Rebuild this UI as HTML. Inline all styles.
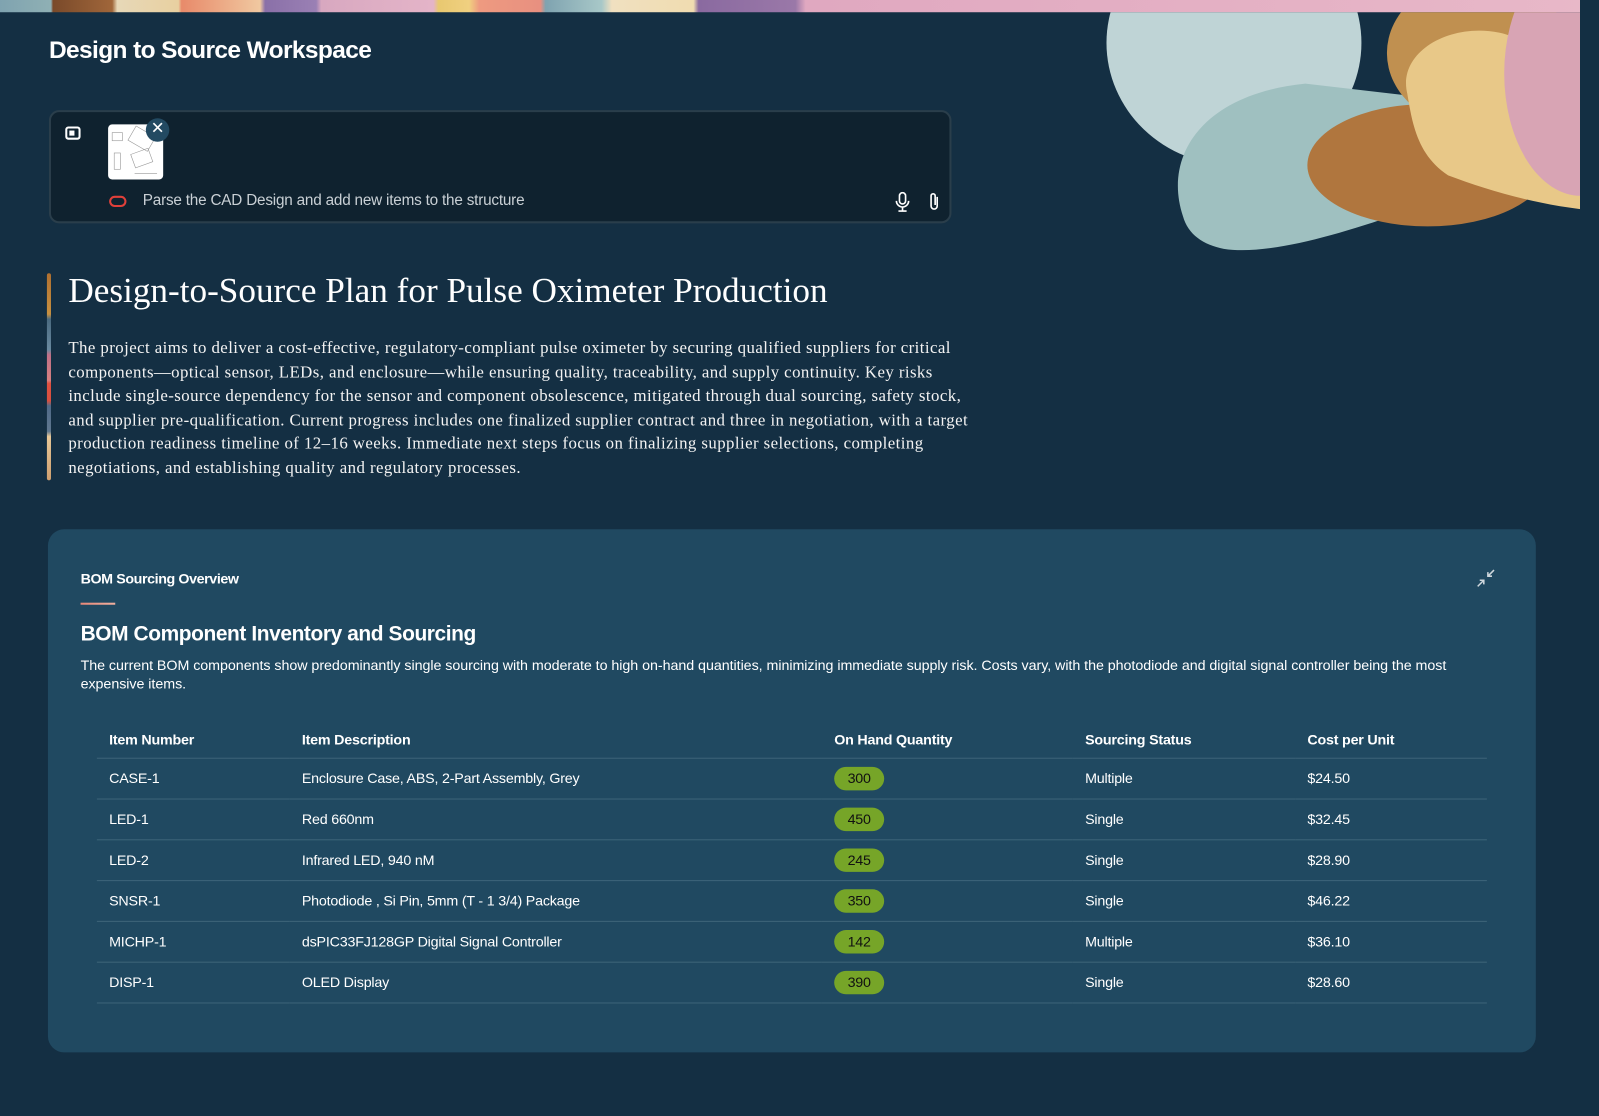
<!DOCTYPE html>
<html><head><meta charset="utf-8"><style>
*{margin:0;padding:0;box-sizing:border-box}
body{width:1599px;height:1115px;background:#142f43;font-family:"Liberation Sans",sans-serif;color:#fff;position:relative;overflow:hidden}
#w{position:absolute;left:0;top:0;width:1568px;height:1094px;transform:scale(1.0198);transform-origin:0 0}
.strip{position:absolute;left:0;top:0;width:1568px;height:12px;background:linear-gradient(90deg,#7fa3b0 0,#8fb0b4 50px,#7a4a2a 52px,#a0663a 110px,#e7d8b8 115px,#e8d0a0 175px,#e88a6a 178px,#f0c8a0 255px,#8a70a8 260px,#9a80b4 310px,#d8a8c0 315px,#e4b4c8 425px,#e8c870 430px,#f0d080 460px,#ee9a80 470px,#e89080 530px,#7fa3b0 535px,#a8c8c8 590px,#f0e0c0 600px,#f0dcb0 680px,#8a6aa0 685px,#9a78a8 780px,#e0a8c0 790px,#e8b8c8 100%)}
.rb{position:absolute;left:1549px;top:0;width:40px;height:1115px;background:#132f43}
h1{position:absolute;left:48px;top:36px;font-size:24px;font-weight:bold;letter-spacing:-0.6px}
.inp{position:absolute;left:48px;top:108px;width:885px;height:111px;background:#0f222f;border:2px solid #2a3e4b;border-radius:10px}
.thumb{position:absolute;left:56px;top:12px;width:54px;height:54px;background:#fff;border-radius:4px}
.x{position:absolute;left:93px;top:6px;width:23px;height:23px;border-radius:50%;background:#234a62;color:#fff;font-size:16px;text-align:center;line-height:22px}
.ph{position:absolute;left:90px;top:78px;font-size:15px;color:#c9d0d5;letter-spacing:-0.2px}
h2{position:absolute;left:67px;top:266px;font-family:"Liberation Serif",serif;font-weight:normal;font-size:34.5px;white-space:nowrap}
.bar{position:absolute;left:46px;top:268px;width:4px;height:203px;background:linear-gradient(#b07030 0,#c89040 40px,#4a6a80 45px,#6a8aa0 75px,#c07088 80px,#d88080 105px,#e05040 108px,#d85040 125px,#506a88 130px,#607890 155px,#e8c898 160px,#d0a070 203px);border-radius:2px}
.p{position:absolute;left:67px;top:329px;font-family:"Liberation Serif",serif;font-size:16.5px;letter-spacing:0.42px;line-height:23.6px;white-space:nowrap;color:#f3f3f3}
.card{position:absolute;left:47px;top:519px;width:1459px;height:513px;background:#204961;border-radius:16px}
.ov{position:absolute;left:32px;top:40px;font-size:14px;font-weight:bold;letter-spacing:-0.4px}
.ul{position:absolute;left:32px;top:72px;width:34px;height:2px;background:linear-gradient(90deg,#e88878,#f0b0a0)}
.h3{position:absolute;left:32px;top:91px;font-size:20.5px;font-weight:bold;letter-spacing:-0.4px}
.desc{position:absolute;left:32px;top:124px;width:1370px;font-size:14px;line-height:18px;letter-spacing:-0.05px}
table{position:absolute;left:48px;top:188px;width:1363px;border-collapse:collapse;font-size:14px;letter-spacing:-0.2px}
th{text-align:left;font-weight:bold;height:36px;border-bottom:1px solid #3d6479;padding-left:12px}
td{height:40px;border-bottom:1px solid #3d6479;padding-left:12px}
.pill{display:inline-block;background:#76a528;color:#111;border-radius:12px;width:49px;height:23px;line-height:23px;text-align:center}
</style></head><body>
<div id="w">
<div class="strip"></div>
<svg style="position:absolute;left:1080px;top:12px" width="488" height="235" viewBox="0 0 488 235">
<ellipse cx="130" cy="30" rx="125" ry="120" fill="#bfd4d6"/>
<path d="M80 200 C60 140 100 80 200 70 L330 85 L340 180 C260 210 170 240 120 232 C100 228 85 218 80 200Z" fill="#9fc0c0"/>
<ellipse cx="370" cy="40" rx="90" ry="75" fill="#c09050"/>
<ellipse cx="320" cy="150" rx="118" ry="60" fill="#b0763e"/>
<path d="M300 80 C290 40 340 10 390 20 C440 30 470 100 488 140 L488 195 C430 190 380 175 340 160 C310 140 305 110 300 80Z" fill="#e8c888"/>
<ellipse cx="470" cy="60" rx="75" ry="120" fill="#d8a4b4"/>
</svg>
<h1>Design to Source Workspace</h1>
<div class="inp">
<div style="position:absolute;left:14px;top:14px;width:15px;height:13px;border:2px solid #fff;border-radius:3px"><div style="position:absolute;left:2px;top:2px;width:5px;height:5px;background:#fff"></div></div>
<div class="thumb"><svg width="54" height="54"><g stroke="#999" fill="none" stroke-width="0.6"><rect x="4" y="8" width="10" height="8"/><rect x="22" y="6" width="22" height="16" transform="rotate(30 33 14)"/><rect x="6" y="28" width="6" height="16"/><rect x="24" y="26" width="18" height="14" transform="rotate(-20 33 33)"/><line x1="26" y1="48" x2="48" y2="48"/></g></svg></div>
<div class="x">✕</div>
<div style="position:absolute;left:57px;top:82px;width:17px;height:11px;border:2px solid #e0403a;border-radius:6px"></div>
<div class="ph">Parse the CAD Design and add new items to the structure</div>
<svg style="position:absolute;left:828px;top:78px" width="14" height="20" viewBox="0 0 14 20" fill="none" stroke="#fff" stroke-width="1.6"><rect x="4" y="1" width="6" height="11" rx="3"/><path d="M1 9a6 6 0 0 0 12 0M7 15v4M3 19h8"/></svg>
<svg style="position:absolute;left:860px;top:78px" width="12" height="20" viewBox="0 0 12 20" fill="none" stroke="#fff" stroke-width="1.6"><path d="M9 5v9a3 3 0 0 1-6 0V4a2 2 0 0 1 4 0v9"/></svg>
</div>
<div class="bar"></div>
<h2>Design-to-Source Plan for Pulse Oximeter Production</h2>
<div class="p">The project aims to deliver a cost-effective, regulatory-compliant pulse oximeter by securing qualified suppliers for critical<br>components—optical sensor, LEDs, and enclosure—while ensuring quality, traceability, and supply continuity. Key risks<br>include single-source dependency for the sensor and component obsolescence, mitigated through dual sourcing, safety stock,<br>and supplier pre-qualification. Current progress includes one finalized supplier contract and three in negotiation, with a target<br>production readiness timeline of 12–16 weeks. Immediate next steps focus on finalizing supplier selections, completing<br>negotiations, and establishing quality and regulatory processes.</div>
<div class="card">
<div class="ov">BOM Sourcing Overview</div>
<svg style="position:absolute;left:1401px;top:39px" width="18" height="18" viewBox="0 0 18 18" fill="none" stroke="#cfd8dd" stroke-width="1.5"><path d="M17 1l-6 6M11 3v4h4M1 17l6-6M3 11h4v4"/></svg>
<div class="ul"></div>
<div class="h3">BOM Component Inventory and Sourcing</div>
<div class="desc">The current BOM components show predominantly single sourcing with moderate to high on-hand quantities, minimizing immediate supply risk. Costs vary, with the photodiode and digital signal controller being the most<br>expensive items.</div>
<table>
<colgroup><col style="width:189px"><col style="width:522px"><col style="width:246px"><col style="width:218px"><col></colgroup>
<tr><th>Item Number</th><th>Item Description</th><th>On Hand Quantity</th><th>Sourcing Status</th><th>Cost per Unit</th></tr>
<tr><td>CASE-1</td><td>Enclosure Case, ABS, 2-Part Assembly, Grey</td><td><span class="pill">300</span></td><td>Multiple</td><td>$24.50</td></tr>
<tr><td>LED-1</td><td>Red 660nm</td><td><span class="pill">450</span></td><td>Single</td><td>$32.45</td></tr>
<tr><td>LED-2</td><td>Infrared LED, 940 nM</td><td><span class="pill">245</span></td><td>Single</td><td>$28.90</td></tr>
<tr><td>SNSR-1</td><td>Photodiode , Si Pin, 5mm (T - 1 3/4) Package</td><td><span class="pill">350</span></td><td>Single</td><td>$46.22</td></tr>
<tr><td>MICHP-1</td><td>dsPIC33FJ128GP Digital Signal Controller</td><td><span class="pill">142</span></td><td>Multiple</td><td>$36.10</td></tr>
<tr><td>DISP-1</td><td>OLED Display</td><td><span class="pill">390</span></td><td>Single</td><td>$28.60</td></tr>
</table>
</div>
</div>
<div class="rb" style="left:1580px;width:19px"></div>
</body></html>
